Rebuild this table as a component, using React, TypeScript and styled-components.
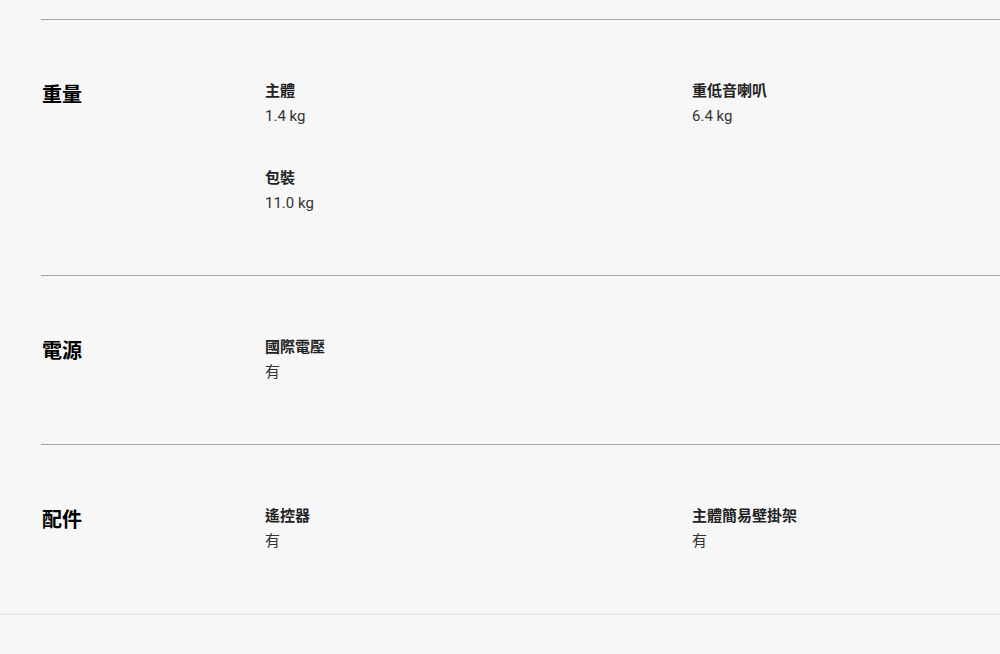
import React from 'react';
import styled, { createGlobalStyle } from 'styled-components';

const GlobalStyle = createGlobalStyle`
  html, body {
    margin: 0;
    padding: 0;
    background: #f7f7f7;
  }
  body {
    font-family: Roboto, 'Noto Sans CJK TC', sans-serif;
    color: #000;
  }
`;

const Page = styled.div`
  padding-top: 19px;
  min-height: 654px;
  box-sizing: border-box;
`;

const Wrapper = styled.div`
  border-bottom: 2px solid #e8e8e8;
`;

const Container = styled.div`
  margin-left: 41px;
`;

const Section = styled.section`
  display: grid;
  grid-template-columns: 224px 1fr;
  border-top: 1px solid #a3a3a3;
  padding: 59px 0;
`;

const Title = styled.h2`
  margin: 0;
  padding-left: 1px;
  font-size: 20px;
  line-height: 32px;
  font-weight: 700;
  color: #000;
`;

const Items = styled.div`
  display: grid;
  grid-template-columns: 427px 1fr;
  row-gap: 37px;
`;

const Item = styled.div`
  display: flex;
  flex-direction: column;
`;

const Label = styled.div`
  font-size: 15px;
  line-height: 24px;
  font-weight: 700;
  color: #222;
`;

const Value = styled.div`
  font-size: 15px;
  line-height: 26px;
  font-weight: 400;
  color: #333;
`;

type Spec = { label: string; value: string };
type Group = { title: string; items: Spec[] };

const groups: Group[] = [
  {
    title: '重量',
    items: [
      { label: '主體', value: '1.4 kg' },
      { label: '重低音喇叭', value: '6.4 kg' },
      { label: '包裝', value: '11.0 kg' },
    ],
  },
  {
    title: '電源',
    items: [{ label: '國際電壓', value: '有' }],
  },
  {
    title: '配件',
    items: [
      { label: '遙控器', value: '有' },
      { label: '主體簡易壁掛架', value: '有' },
    ],
  },
];

const App: React.FC = () => {
  return (
    <>
      <GlobalStyle />
      <Page>
        <Wrapper>
          <Container>
            {groups.map((group) => (
              <Section key={group.title}>
                <Title>{group.title}</Title>
                <Items>
                  {group.items.map((item) => (
                    <Item key={item.label}>
                      <Label>{item.label}</Label>
                      <Value>{item.value}</Value>
                    </Item>
                  ))}
                </Items>
              </Section>
            ))}
          </Container>
        </Wrapper>
      </Page>
    </>
  );
};

export default App;
